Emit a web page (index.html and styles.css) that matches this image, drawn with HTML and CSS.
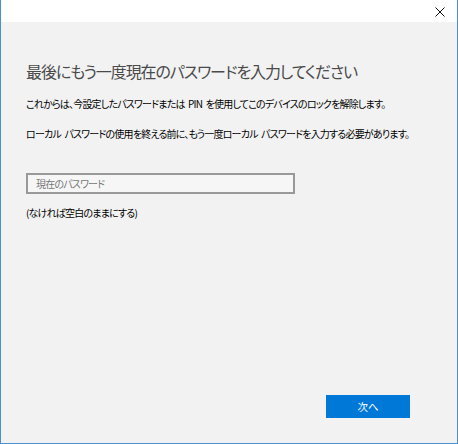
FILE: index.html
```html
<!DOCTYPE html>
<html lang="ja">
<head>
<meta charset="utf-8">
<link rel="stylesheet" href="styles.css">
</head>
<body>
<div class="window">
  <div class="titlebar">
    <span class="close" aria-label="閉じる">
      <svg width="10" height="10" viewBox="0 0 10 10"><path d="M0.5 0.5L9.5 9.5M9.5 0.5L0.5 9.5" stroke="#111" stroke-width="1" fill="none"/></svg>
    </span>
  </div>
  <div class="content">
    <h1 class="heading">最後にもう一度現在のパスワードを入力してください</h1>
    <p class="text t1">これからは、今設定したパスワードまたは PIN を使用してこのデバイスのロックを解除します。</p>
    <p class="text t2">ローカル パスワードの使用を終える前に、もう一度ローカル パスワードを入力する必要があります。</p>
    <div class="field"><span class="placeholder">現在のパスワード</span></div>
    <p class="text note">(なければ空白のままにする)</p>
    <div class="spacer"></div>
    <div class="actions"><button class="next">次へ</button></div>
  </div>
</div>
</body>
</html>
```
FILE: styles.css
```css
html, body { margin: 0; padding: 0; }
body {
  width: 458px; height: 444px; overflow: hidden;
  font-family: "Noto Sans CJK JP", "Noto Sans", sans-serif;
  font-feature-settings: "palt";
}
.window {
  box-sizing: border-box;
  width: 458px; height: 444px;
  border: 1px solid #4a8fcf; border-top: none;
  background: #f2f2f2;
  display: flex; flex-direction: column;
}
.titlebar {
  height: 22px; background: #fff;
  display: flex; justify-content: flex-end; align-items: center;
  padding-right: 12px;
}
.close { display: flex; margin-top: 2px; }
.content {
  flex: 1; display: flex; flex-direction: column;
  padding: 0 47px 25px 25px;
}
.heading {
  margin: 37px 0 0; font-weight: 400; font-size: 16px; line-height: 24px;
  letter-spacing: -1.1px;
  color: #4a4a4a; white-space: nowrap;
}
.text {
  margin: 0; font-size: 10px; line-height: 16px; letter-spacing: -0.8px;
  word-spacing: 2px;
  color: #000; white-space: nowrap;
}
.t1 { margin-top: 13px; }
.t2 { margin-top: 14px; }
.field {
  margin-top: 31px; width: 269px; height: 21px; box-sizing: border-box;
  border: 2px solid #999; background: #f6f6f6;
  display: flex; align-items: center; padding-left: 8px;
}
.placeholder { font-size: 10px; letter-spacing: -0.8px; color: #777; }
.note { margin-top: 11px; }
.spacer { flex: 1; }
.actions { display: flex; justify-content: flex-end; }
.next {
  width: 84px; height: 23px; border: none; background: #0078d7; color: #fff;
  font-family: inherit; font-size: 10.5px; padding: 0;
}
```
